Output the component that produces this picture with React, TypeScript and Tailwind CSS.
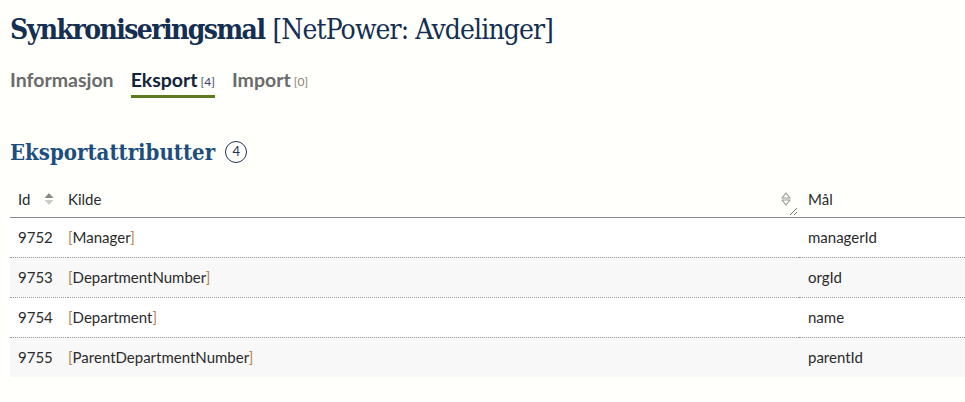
import { useState } from 'react'

const rows = [
  { id: 9752, kilde: 'Manager', maal: 'managerId' },
  { id: 9753, kilde: 'DepartmentNumber', maal: 'orgId' },
  { id: 9754, kilde: 'Department', maal: 'name' },
  { id: 9755, kilde: 'ParentDepartmentNumber', maal: 'parentId' },
]

const tabs = [
  { label: 'Informasjon', count: null },
  { label: 'Eksport', count: 4 },
  { label: 'Import', count: 0 },
]

const SortBoth = () => (
  <svg width="10" height="14" viewBox="0 0 10 14" className="text-[#999]">
    <path d="M5 1 L9 6 H1 Z" fill="none" stroke="currentColor" strokeWidth="1.2" strokeLinejoin="round" />
    <path d="M5 13 L9 8 H1 Z" fill="none" stroke="currentColor" strokeWidth="1.2" strokeLinejoin="round" />
  </svg>
)

const SortAsc = () => (
  <svg width="10" height="14" viewBox="0 0 10 14">
    <path d="M5 1 L9.5 6 H0.5 Z" fill="#888" />
    <path d="M5 13 L9.5 8 H0.5 Z" fill="#ccc" />
  </svg>
)

const App = () => {
  const [active, setActive] = useState('Eksport')

  return (
    <div className="min-h-[402px] bg-[#fffffb] pl-[10px] font-['Source_Sans_Pro','Lato','Open_Sans',sans-serif] text-[#2b2b2b]">
      <h1 className="pt-[12px] h-[48px] leading-[36px] text-[28px] text-[#142f52] font-['DejaVu_Serif_Condensed','DejaVu_Serif',serif]">
        <span className="font-bold tracking-[-1.55px]">Synkroniseringsmal</span>{' '}
        <span className="font-normal tracking-[-0.9px]">[NetPower: Avdelinger]</span>
      </h1>

      {/* Tabs */}
      <nav className="mt-[20px] flex gap-[17px]">
        {tabs.map((t) => {
          const isActive = t.label === active
          return (
            <button
              key={t.label}
              onClick={() => setActive(t.label)}
              className={`h-[30px] flex items-start border-b-[3px] ${
                isActive ? 'border-[#5b7a1f] text-[#14243a]' : 'border-transparent text-[#6b6b6b]'
              }`}
            >
              <span className="text-[19.5px] font-bold leading-[24px]">{t.label}</span>
              {t.count !== null && (
                <span className={`ml-[3px] mt-[6px] text-[12px] leading-[16px] ${isActive ? 'text-[#3b3f6b]' : 'text-[#8c8270]'}`}>
                  [{t.count}]
                </span>
              )}
            </button>
          )
        })}
      </nav>

      {/* Section heading */}
      <div className="mt-[39px] flex items-center gap-[10px] h-[30px]">
        <h2 className="text-[22px] font-bold text-[#1d4e7e] font-['DejaVu_Serif_Condensed','DejaVu_Serif',serif]">
          Eksportattributter
        </h2>
        <span className="w-[22px] h-[22px] rounded-full border-[1.5px] border-[#1d3557] flex items-center justify-center text-[13px] text-[#1d3557]">
          4
        </span>
      </div>

      {/* Table */}
      <table className="mt-[15px] w-full border-collapse text-[15px]">
        <thead>
          <tr className="h-[35px] border-b border-[#8a8a8a]">
            <th className="w-[58px] pl-[8px] text-left font-normal">
              <span className="inline-flex items-center gap-[14px]">
                Id <SortAsc />
              </span>
            </th>
            <th className="text-left font-normal relative">
              <div className="flex items-center justify-between pr-[8px]">
                <span>Kilde</span>
                <SortBoth />
              </div>
              <span className="absolute right-[2px] bottom-[2px] w-[7px] h-[7px] bg-[linear-gradient(135deg,transparent_45%,#777_45%,#777_55%,transparent_55%,transparent_75%,#777_75%,#777_85%,transparent_85%)]" />
            </th>
            <th className="w-[166px] pl-[9px] text-left font-normal">Mål</th>
          </tr>
        </thead>
        <tbody>
          {rows.map((r, i) => (
            <tr
              key={r.id}
              className={`h-[40px] ${i % 2 === 1 ? 'bg-[#f8f8f8]' : 'bg-white'} ${
                i < rows.length - 1 ? 'border-b border-dotted border-[#999]' : ''
              }`}
            >
              <td className="pl-[8px]">{r.id}</td>
              <td>
                <span className="text-[#b88552]">[</span>
                {r.kilde}
                <span className="text-[#b88552]">]</span>
              </td>
              <td className="pl-[9px]">{r.maal}</td>
            </tr>
          ))}
        </tbody>
      </table>
    </div>
  )
}

export default App
